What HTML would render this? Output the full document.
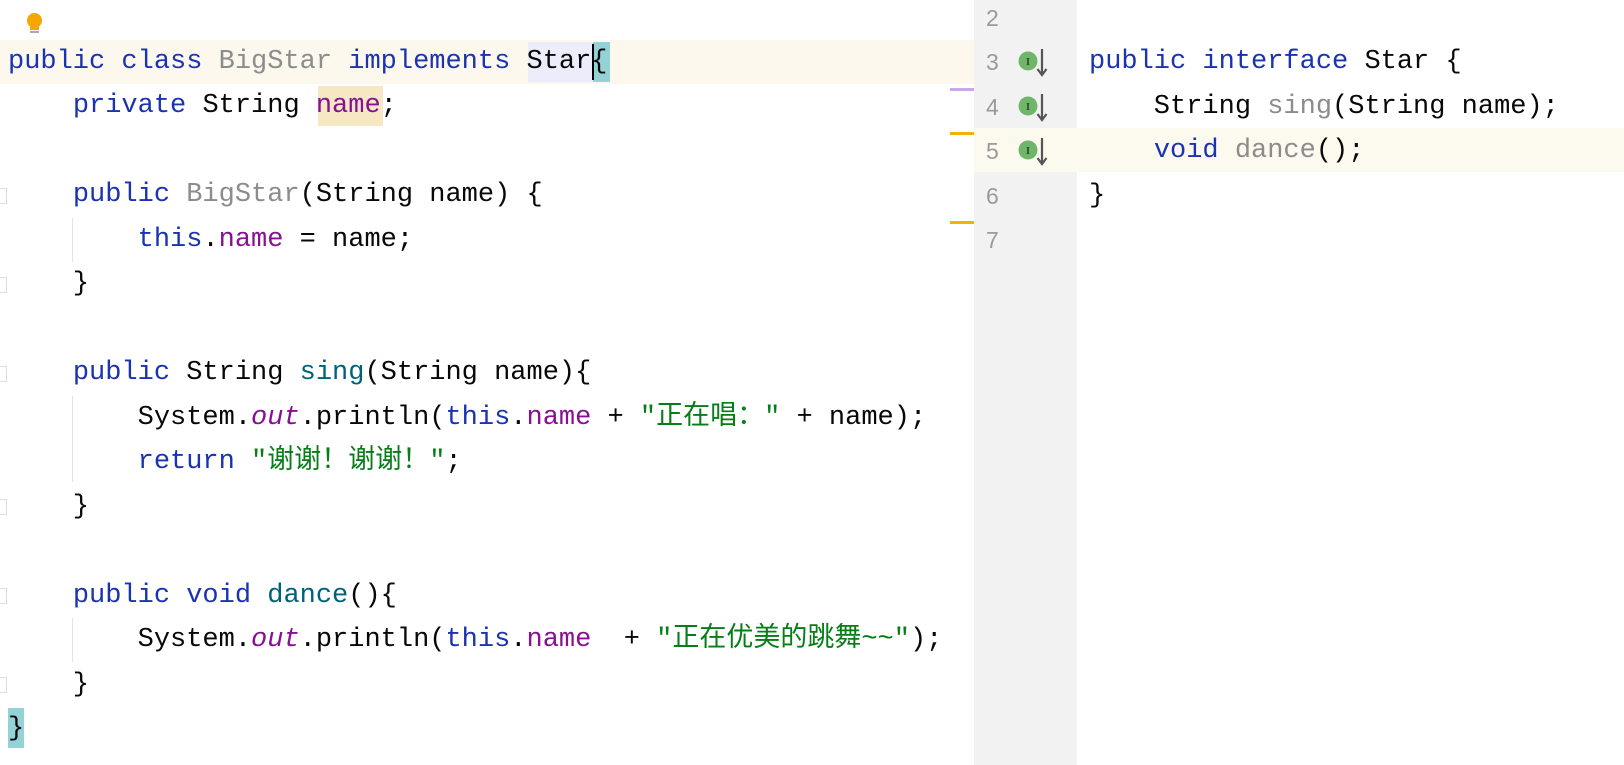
<!DOCTYPE html>
<html><head><meta charset="utf-8"><style>
html,body{margin:0;padding:0;width:1624px;height:765px;overflow:hidden;background:#fff;}
.ln{position:absolute;left:8px;height:44px;line-height:44px;white-space:pre;font-family:"Liberation Mono","Noto Sans CJK SC",monospace;font-size:27px;color:#080808;}
.rl{left:1089px;}
.k{color:#1a33b0}.g{color:#8c8c8c}.f{color:#871094}.s{color:#067d17}.m{color:#00627a}.i{font-style:italic;color:#871094}
.num{position:absolute;left:986px;width:30px;font-family:"Liberation Sans",sans-serif;font-size:23px;color:#9a9a9a;height:44px;line-height:44px;}
.guide{position:absolute;left:72px;width:1px;background:#e2e2e2;}
.fold{position:absolute;left:0;width:6px;height:14px;border:1px solid #ddd;border-left:none;}
.ic{position:absolute;left:1018px;}
</style></head><body>
<div style="position:absolute;left:0;top:40px;width:974px;height:44px;background:#fcf8ee"></div>
<div style="position:absolute;left:974px;top:0;width:103px;height:765px;background:#f2f2f2"></div>
<div style="position:absolute;left:974px;top:128px;width:650px;height:44px;background:#fcf9ef"></div>
<div style="position:absolute;left:950px;top:88px;width:24px;height:3px;background:#c9a8f0"></div>
<div style="position:absolute;left:950px;top:132px;width:24px;height:3px;background:#f0b400"></div>
<div style="position:absolute;left:950px;top:221px;width:24px;height:3px;background:#f0b400"></div>
<!-- bulb -->
<div style="position:absolute;left:27px;top:13px;width:15px;height:15px;border-radius:50%;background:#f4a700"></div>
<div style="position:absolute;left:30px;top:27px;width:9px;height:3px;background:#f4a700"></div>
<div style="position:absolute;left:30px;top:31px;width:9px;height:2px;background:#aaa"></div>
<!-- highlights -->
<div style="position:absolute;left:318px;top:86px;width:65px;height:40px;background:#f7e8c4"></div>
<div style="position:absolute;left:528px;top:42px;width:65px;height:40px;background:#ececfa"></div>
<div style="position:absolute;left:593px;top:42px;width:17px;height:40px;background:#93d3d8"></div>
<div style="position:absolute;left:592px;top:44px;width:2px;height:36px;background:#000"></div>
<div style="position:absolute;left:8px;top:708px;width:16px;height:40px;background:#93d3d8"></div>
<div class="guide" style="top:218px;height:44px"></div>
<div class="guide" style="top:396px;height:86px"></div>
<div class="guide" style="top:618px;height:44px"></div>
<div class="fold" style="top:188px"></div><div class="fold" style="top:277px"></div>
<div class="fold" style="top:366px"></div><div class="fold" style="top:499px"></div>
<div class="fold" style="top:588px"></div><div class="fold" style="top:677px"></div>

<div class="ln" style="top:40px"><span class="k">public class </span><span class="g">BigStar </span><span class="k">implements </span>Star{</div>
<div class="ln" style="top:84px">    <span class="k">private </span>String <span class="f">name</span>;</div>
<div class="ln" style="top:173px">    <span class="k">public </span><span class="g">BigStar</span>(String name) {</div>
<div class="ln" style="top:218px">        <span class="k">this</span>.<span class="f">name</span> = name;</div>
<div class="ln" style="top:262px">    }</div>
<div class="ln" style="top:351px">    <span class="k">public </span>String <span class="m">sing</span>(String name){</div>
<div class="ln" style="top:396px">        System.<span class="i">out</span>.println(<span class="k">this</span>.<span class="f">name</span> + <span class="s">"正在唱："</span> + name);</div>
<div class="ln" style="top:440px">        <span class="k">return </span><span class="s">"谢谢！谢谢！"</span>;</div>
<div class="ln" style="top:485px">    }</div>
<div class="ln" style="top:574px">    <span class="k">public void </span><span class="m">dance</span>(){</div>
<div class="ln" style="top:618px">        System.<span class="i">out</span>.println(<span class="k">this</span>.<span class="f">name</span>  + <span class="s">"正在优美的跳舞~~"</span>);</div>
<div class="ln" style="top:663px">    }</div>
<div class="ln" style="top:707px">}</div>

<div class="num" style="top:-4px">2</div>
<div class="num" style="top:40px">3</div>
<div class="num" style="top:85px">4</div>
<div class="num" style="top:129px">5</div>
<div class="num" style="top:174px">6</div>
<div class="num" style="top:218px">7</div>
<svg class="ic" style="top:47px" width="34" height="32"><circle cx="10" cy="14" r="9.5" fill="#6fb56a"/><text x="10" y="18" font-size="11" font-weight="bold" text-anchor="middle" fill="#2d4d2a" font-family="Liberation Serif">I</text><path d="M24 2V27M19.5 22L24 28L28.5 22" stroke="#555" stroke-width="2.2" fill="none"/></svg>
<svg class="ic" style="top:92px" width="34" height="32"><circle cx="10" cy="14" r="9.5" fill="#6fb56a"/><text x="10" y="18" font-size="11" font-weight="bold" text-anchor="middle" fill="#2d4d2a" font-family="Liberation Serif">I</text><path d="M24 2V27M19.5 22L24 28L28.5 22" stroke="#555" stroke-width="2.2" fill="none"/></svg>
<svg class="ic" style="top:136px" width="34" height="32"><circle cx="10" cy="14" r="9.5" fill="#6fb56a"/><text x="10" y="18" font-size="11" font-weight="bold" text-anchor="middle" fill="#2d4d2a" font-family="Liberation Serif">I</text><path d="M24 2V27M19.5 22L24 28L28.5 22" stroke="#555" stroke-width="2.2" fill="none"/></svg>

<div class="ln rl" style="top:40px"><span class="k">public interface </span>Star {</div>
<div class="ln rl" style="top:85px">    String <span class="g">sing</span>(String name);</div>
<div class="ln rl" style="top:129px">    <span class="k">void </span><span class="g">dance</span>();</div>
<div class="ln rl" style="top:174px">}</div>
</body></html>
